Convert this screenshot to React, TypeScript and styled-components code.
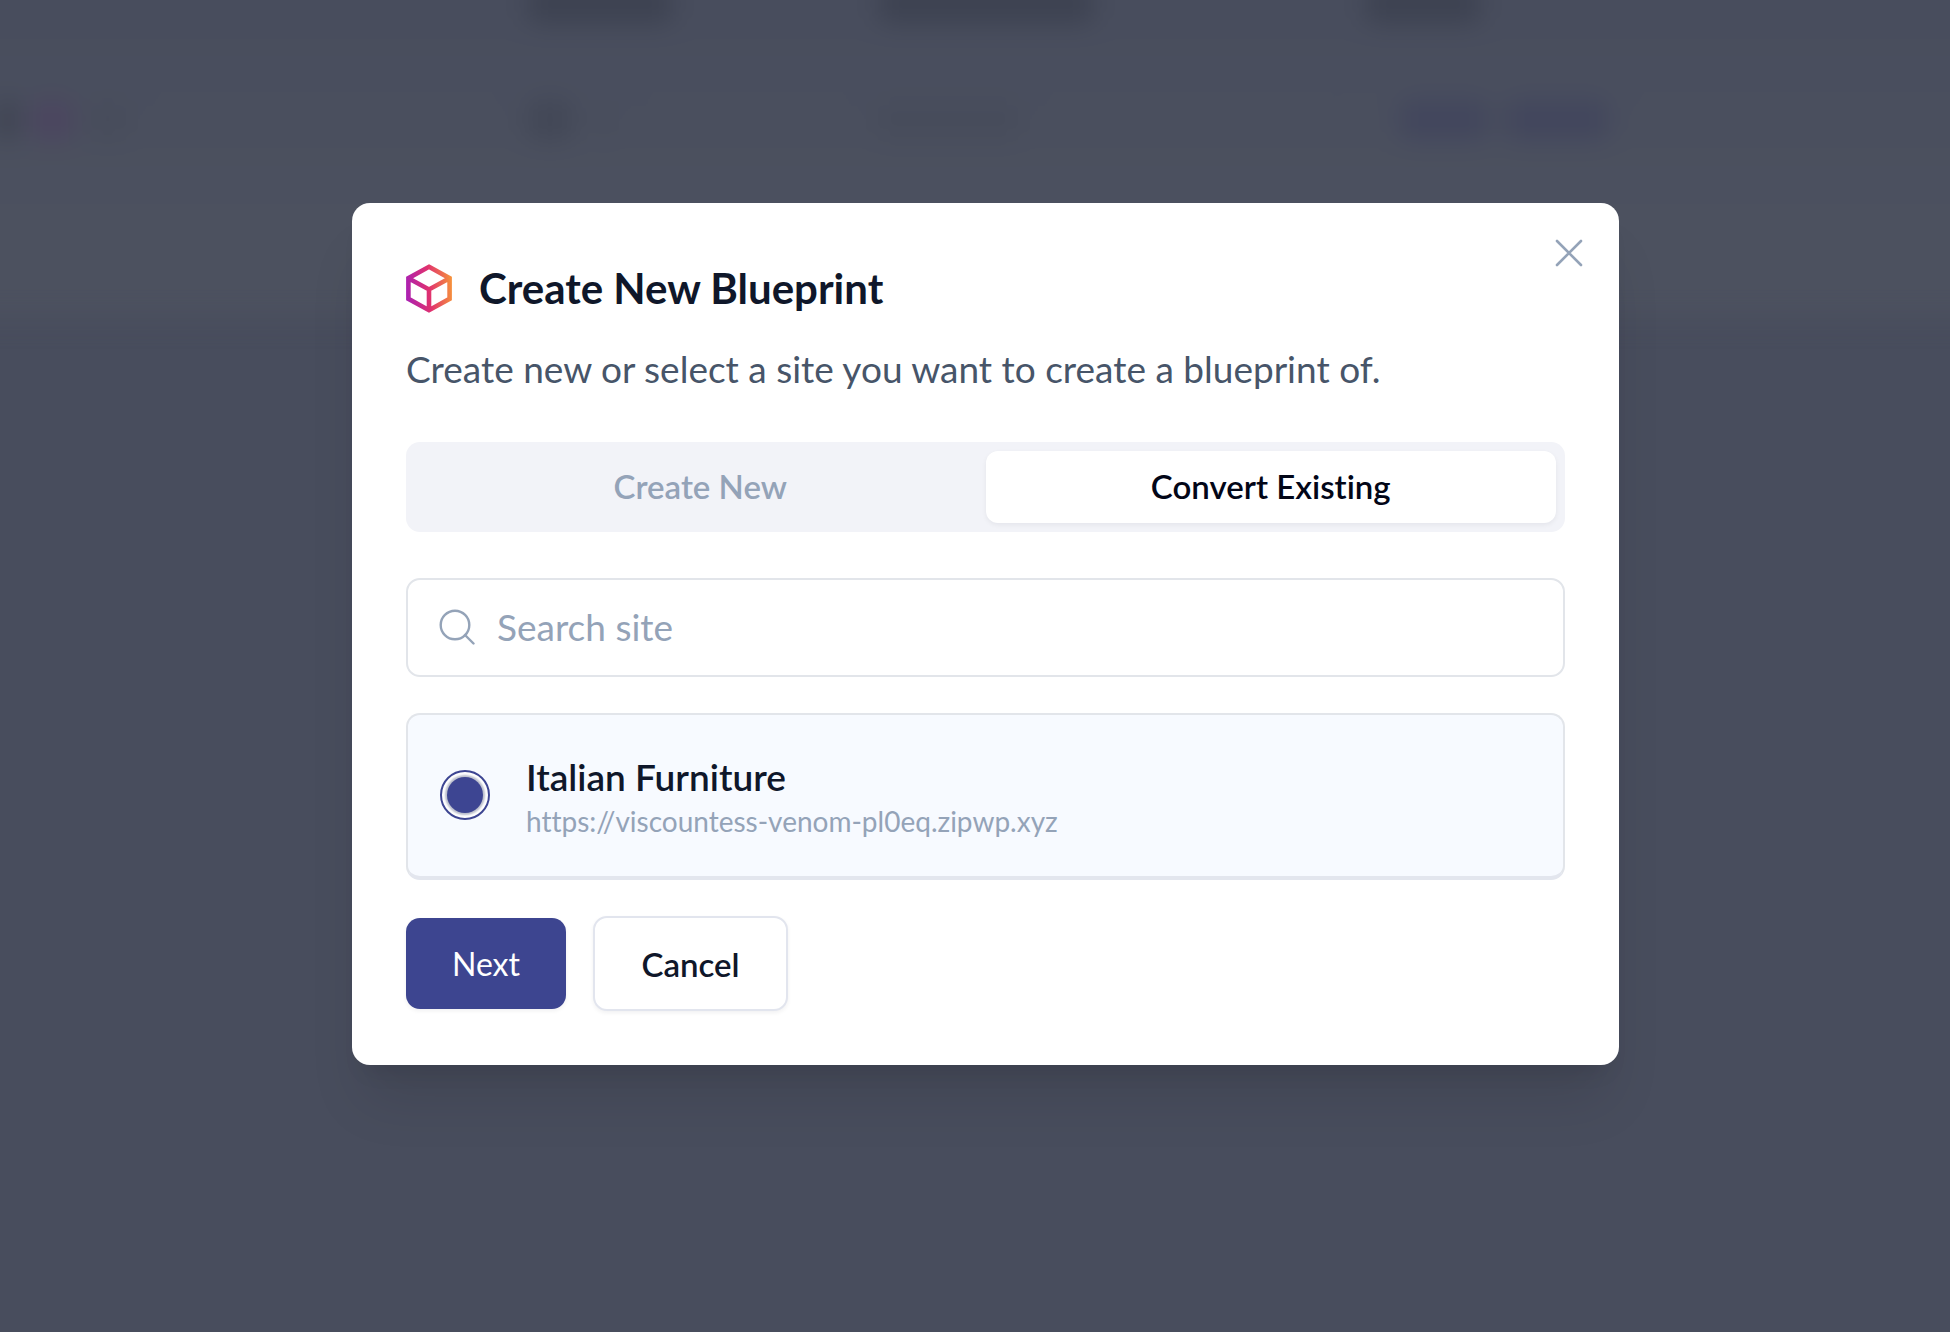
import React, { useState } from "react";
import styled, { createGlobalStyle } from "styled-components";

const GlobalStyle = createGlobalStyle`
  * { box-sizing: border-box; }
  html, body, #root { min-height: 100vh; }
  body {
    margin: 0;
    background: #484d5d;
    font-family: Lato, "Liberation Sans", sans-serif;
    font-variant-ligatures: none;
    color: #0f172a;
  }
  button, input { font-family: inherit; font-variant-ligatures: none; }
`;

const Page = styled.div`
  position: relative;
  min-height: 100vh;
  overflow: hidden;
`;

const Backdrop = styled.div`
  position: absolute;
  inset: 0;
  overflow: hidden;
`;

const BackdropTable = styled.div`
  height: 378px;
  margin: -60px -60px 0;
  padding: 60px 60px 0;
  background: linear-gradient(#484d5d 80px, #4c515f 300px);
  filter: blur(13px);
`;

const BackdropRow = styled.div<{ $height: number }>`
  display: grid;
  grid-template-columns: 27fr 18fr 25fr 30fr;
  align-items: center;
  align-content: center;
  height: ${(p) => p.$height}px;
`;

const Cell = styled.div`
  display: flex;
  gap: 16px;
`;

const Smudge = styled.span<{ $width: number; $color: string }>`
  width: ${(p) => p.$width}px;
  height: 40px;
  border-radius: 12px;
  background: ${(p) => p.$color};
`;

const Stage = styled.main`
  position: relative;
  display: flex;
  justify-content: center;
  padding: 203px 24px 48px 45px;
`;

const Dialog = styled.section`
  position: relative;
  width: 100%;
  max-width: 1267px;
  padding: 54px;
  border-radius: 18px;
  background: #fff;
  box-shadow: 0 45px 56px -11px rgba(0, 0, 0, 0.1), 0 18px 23px -14px rgba(0, 0, 0, 0.1);
`;

const CloseButton = styled.button`
  position: absolute;
  top: 32px;
  right: 32px;
  display: flex;
  padding: 4px;
  border: 0;
  background: none;
  color: #94a3b8;
  cursor: pointer;
`;

const Heading = styled.header`
  display: flex;
  align-items: center;
  gap: 27px;
  height: 63px;
`;

const Title = styled.h1`
  margin: 0;
  font-size: 42px;
  line-height: 63px;
  font-weight: 700;
`;

const Intro = styled.p`
  margin: 22px 0 46px;
  color: #475569;
  font-size: 37px;
  line-height: 54px;
`;

const Tabs = styled.div`
  display: flex;
  padding: 9px;
  border-radius: 14px;
  background: #f2f3f8;
`;

const Tab = styled.button<{ $active: boolean }>`
  flex: 1;
  height: 72px;
  padding: 0 12px 2px;
  border: 0;
  border-radius: 12px;
  background: ${(p) => (p.$active ? "#fff" : "transparent")};
  box-shadow: ${(p) => (p.$active ? "0 2px 5px rgba(15, 23, 42, 0.06)" : "none")};
  color: ${(p) => (p.$active ? "#020617" : "#94a3b8")};
  font-size: 33px;
  line-height: 48px;
  font-weight: 600;
  cursor: pointer;
`;

const SearchBox = styled.label`
  display: flex;
  align-items: center;
  gap: 22px;
  height: 99px;
  margin-top: 46px;
  padding: 0 30px;
  border: 2px solid #e2e5ea;
  border-radius: 14px;
  color: #94a3b8;
`;

const SearchInput = styled.input`
  flex: 1;
  min-width: 0;
  padding: 0 0 2px;
  border: 0;
  outline: 0;
  background: none;
  color: #0f172a;
  font-size: 37px;
  line-height: 54px;
  &::placeholder { color: #94a3b8; opacity: 1; }
`;

const SiteCard = styled.label`
  display: flex;
  align-items: center;
  gap: 36px;
  height: 167px;
  margin: 36px 0;
  padding: 0 32px 2px;
  border: 2px solid #e2e5ea;
  border-bottom: 4px solid #e3e6ee;
  border-radius: 14px;
  background: #f7faff;
  cursor: pointer;
`;

const Radio = styled.input`
  appearance: none;
  display: grid;
  place-items: center;
  flex: none;
  width: 50px;
  height: 50px;
  margin: 0;
  border: 2px solid #3d4592;
  border-radius: 50%;
  background: #fff;
  &:checked::before {
    content: "";
    width: 36px;
    height: 36px;
    border-radius: 50%;
    background: #3d4592;
    box-shadow: 0 0 2px 2px #b9bdcc;
  }
`;

const SiteText = styled.span`
  display: flex;
  flex-direction: column;
  padding-top: 4px;
`;

const SiteName = styled.span`
  font-size: 37px;
  line-height: 48px;
  font-weight: 600;
`;

const SiteUrl = styled.span`
  color: #94a3b8;
  font-size: 28px;
  line-height: 40px;
`;

const Actions = styled.footer`
  display: flex;
  align-items: center;
  gap: 27px;
`;

const Button = styled.button<{ $primary?: boolean }>`
  min-width: ${(p) => (p.$primary ? 160 : 195)}px;
  height: ${(p) => (p.$primary ? 91 : 95)}px;
  border: ${(p) => (p.$primary ? "0" : "2px solid #e2e5ee")};
  border-radius: 14px;
  background: ${(p) => (p.$primary ? "#3d4590" : "#fff")};
  box-shadow: 0 2px 4px rgba(15, 23, 42, 0.06);
  color: ${(p) => (p.$primary ? "#fff" : "#0f172a")};
  font-size: ${(p) => (p.$primary ? 32 : 33)}px;
  line-height: 48px;
  font-weight: ${(p) => (p.$primary ? 400 : 600)};
  cursor: pointer;
`;

const CubeIcon = () => (
  <svg width="46" height="49" viewBox="0 0 46 49" fill="none" aria-hidden="true">
    <defs>
      <linearGradient id="cube" x1="0" y1="24" x2="46" y2="20" gradientUnits="userSpaceOnUse">
        <stop stopColor="#ab21b2" />
        <stop offset="0.5" stopColor="#e0316f" />
        <stop offset="1" stopColor="#f6923c" />
      </linearGradient>
    </defs>
    <path
      d="M23 2.8 43.6 14.2V34.8L23 46.2 2.4 34.8V14.2ZM2.4 14.2 23 25.4 43.6 14.2M23 25.4V46"
      stroke="url(#cube)"
      strokeWidth="4.6"
    />
  </svg>
);

const SearchIcon = () => (
  <svg width="37" height="37" viewBox="0 0 37 37" fill="none" stroke="currentColor" strokeWidth="2.4" strokeLinecap="round" aria-hidden="true">
    <circle cx="17" cy="16" r="14.3" />
    <path d="m27 26 8.5 8.5" />
  </svg>
);

const CloseIcon = () => (
  <svg width="28" height="28" viewBox="0 0 28 28" fill="none" stroke="currentColor" strokeWidth="2.6" strokeLinecap="round" aria-hidden="true">
    <path d="M2 2 26 26M26 2 2 26" />
  </svg>
);

export default function App() {
  const [tab, setTab] = useState("convert");
  const [query, setQuery] = useState("");

  return (
    <Page>
      <GlobalStyle />
      <Backdrop aria-hidden="true">
        <BackdropTable>
          <BackdropRow $height={8}>
            <Cell />
            <Cell><Smudge $width={146} $color="#3d4251" /></Cell>
            <Cell><Smudge $width={216} $color="#3d4251" /></Cell>
            <Cell><Smudge $width={116} $color="#3d4251" /></Cell>
          </BackdropRow>
          <BackdropRow $height={224}>
            <Cell>
              <Smudge $width={14} $color="#383d4b" />
              <Smudge $width={44} $color="#4b455f" />
              <Smudge $width={36} $color="#474c5b" />
            </Cell>
            <Cell>
              <Smudge $width={46} $color="#424756" />
              <Smudge $width={30} $color="#494e5d" />
            </Cell>
            <Cell><Smudge $width={140} $color="#474c5b" /></Cell>
            <Cell>
              <Smudge $width={18} $color="#4a4f5e" />
              <Smudge $width={90} $color="#42465d" />
              <Smudge $width={104} $color="#42465d" />
            </Cell>
          </BackdropRow>
        </BackdropTable>
      </Backdrop>
      <Stage>
        <Dialog role="dialog" aria-modal="true" aria-labelledby="dialog-title">
          <CloseButton type="button" aria-label="Close"><CloseIcon /></CloseButton>
          <Heading>
            <CubeIcon />
            <Title id="dialog-title">Create New Blueprint</Title>
          </Heading>
          <Intro>Create new or select a site you want to create a blueprint of.</Intro>
          <Tabs role="tablist">
            <Tab type="button" role="tab" aria-selected={tab === "create"} $active={tab === "create"} onClick={() => setTab("create")}>
              Create New
            </Tab>
            <Tab type="button" role="tab" aria-selected={tab === "convert"} $active={tab === "convert"} onClick={() => setTab("convert")}>
              Convert Existing
            </Tab>
          </Tabs>
          <SearchBox htmlFor="site-search">
            <SearchIcon />
            <SearchInput
              id="site-search"
              type="text"
              aria-label="Search site"
              placeholder="Search site"
              value={query}
              onChange={(e) => setQuery(e.target.value)}
            />
          </SearchBox>
          <SiteCard htmlFor="site-italian">
            <Radio id="site-italian" type="radio" name="site" defaultChecked />
            <SiteText>
              <SiteName>Italian Furniture</SiteName>
              <SiteUrl>https://viscountess-venom-pl0eq.zipwp.xyz</SiteUrl>
            </SiteText>
          </SiteCard>
          <Actions>
            <Button type="button" $primary>Next</Button>
            <Button type="button">Cancel</Button>
          </Actions>
        </Dialog>
      </Stage>
    </Page>
  );
}
